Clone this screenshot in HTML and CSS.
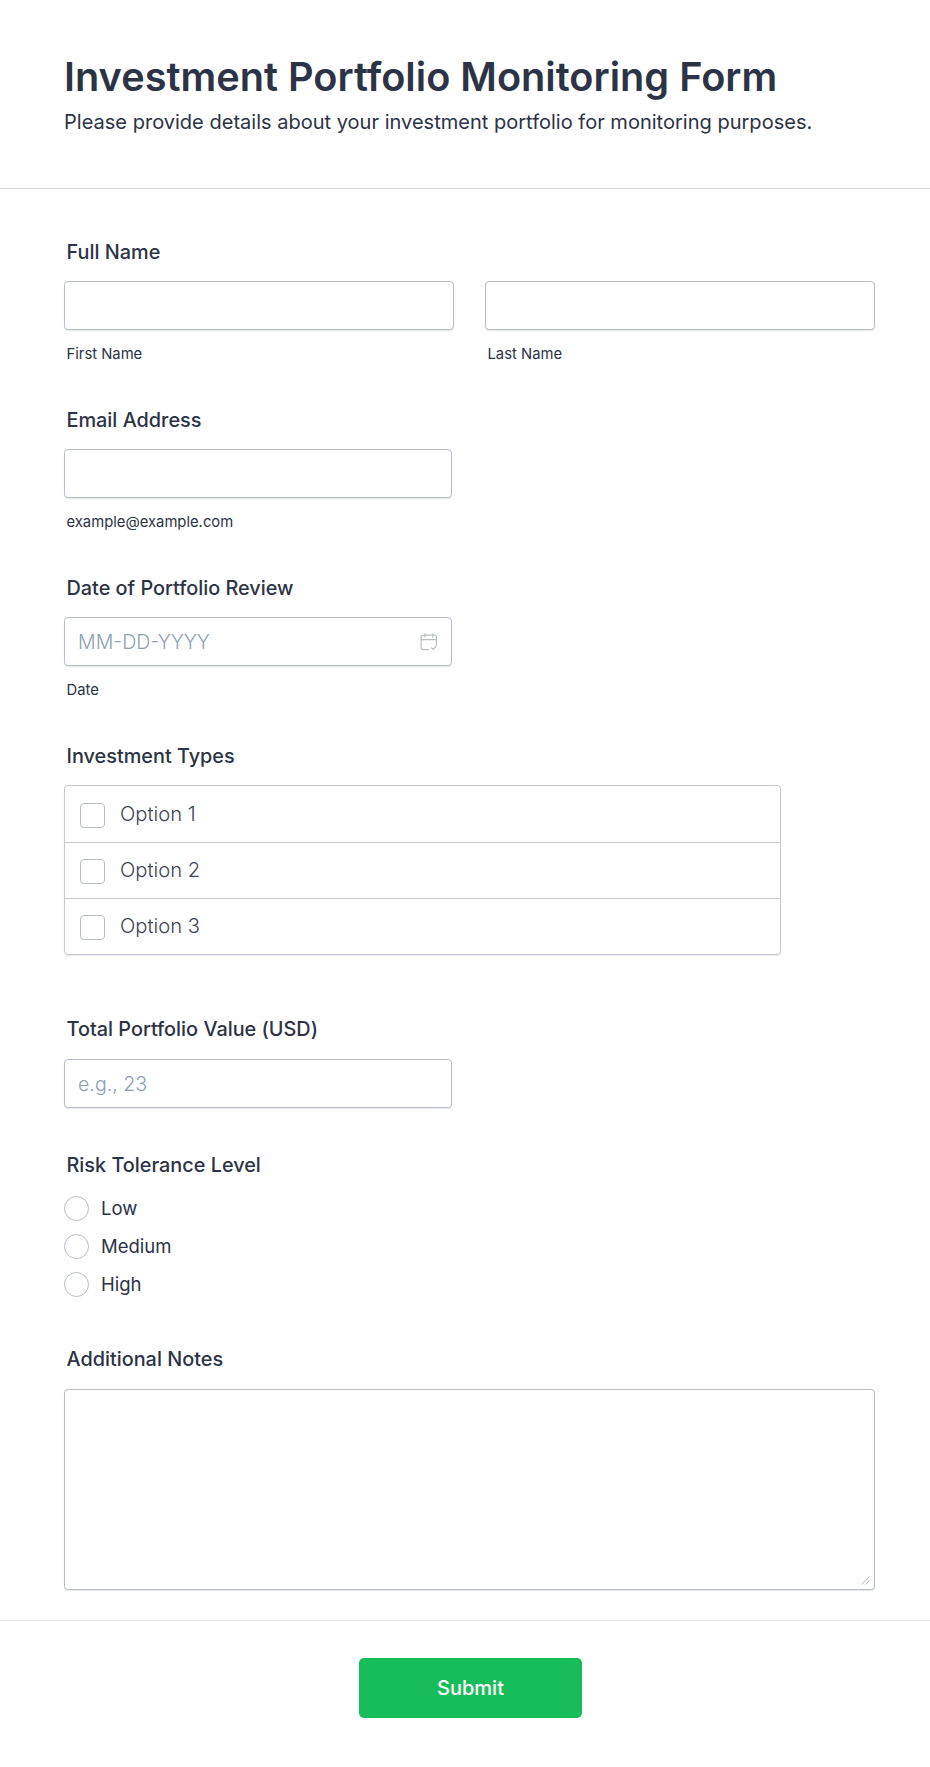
FILE: index.html
```html
<!DOCTYPE html>
<html lang="en">
<head>
<meta charset="utf-8">
<title>Investment Portfolio Monitoring Form</title>
<link rel="stylesheet" href="styles.css">
</head>
<body>
<form class="form">
  <header class="head">
    <h1 class="title">Investment Portfolio Monitoring Form</h1>
    <p class="subtitle">Please provide details about your investment portfolio for monitoring purposes.</p>
  </header>
  <div class="fields">
    <div class="field">
      <div class="label">Full Name</div>
      <div class="name-row">
        <div class="name-col"><input class="input" type="text"><div class="sub">First Name</div></div>
        <div class="name-col"><input class="input" type="text"><div class="sub">Last Name</div></div>
      </div>
    </div>
    <div class="field">
      <div class="label">Email Address</div>
      <input class="input short" type="email">
      <div class="sub">example@example.com</div>
    </div>
    <div class="field">
      <div class="label">Date of Portfolio Review</div>
      <div class="date-wrap">
        <input class="input" type="text" placeholder="MM-DD-YYYY">
        <svg class="cal" viewBox="0 0 18 18" fill="none" stroke="currentColor" stroke-width="1.2" stroke-linecap="round" stroke-linejoin="round" aria-hidden="true">
          <path d="M9 16.6H3.2a2 2 0 0 1-2-2V4.2a2 2 0 0 1 2-2h11.2a2 2 0 0 1 2 2v7.4"/>
          <path d="M1.2 6.6h15.2M5 .8v3M12.8.8v3"/>
          <path d="M11.4 14.8l1.8 1.6 3.2-3.4"/>
        </svg>
      </div>
      <div class="sub">Date</div>
    </div>
    <div class="field options-field">
      <div class="label">Investment Types</div>
      <div class="options">
        <label class="option"><input class="check" type="checkbox"><span>Option 1</span></label>
        <label class="option"><input class="check" type="checkbox"><span>Option 2</span></label>
        <label class="option"><input class="check" type="checkbox"><span>Option 3</span></label>
      </div>
    </div>
    <div class="field value-field">
      <div class="label label-wide">Total Portfolio Value (USD)</div>
      <input class="input short" type="text" placeholder="e.g., 23">
    </div>
    <div class="field risk-field">
      <div class="label risk-label">Risk Tolerance Level</div>
      <div class="radios">
        <label class="radio"><input class="dot" type="radio" name="risk"><span>Low</span></label>
        <label class="radio"><input class="dot" type="radio" name="risk"><span>Medium</span></label>
        <label class="radio"><input class="dot" type="radio" name="risk"><span>High</span></label>
      </div>
    </div>
    <div class="field notes-field">
      <div class="label label-wide">Additional Notes</div>
      <div class="notes-wrap">
        <textarea class="notes"></textarea>
        <svg class="grip" viewBox="0 0 9 9" fill="none" stroke="currentColor" stroke-width="1" aria-hidden="true">
          <path d="M0.5 8.5L8.5 0.5M4.5 8.5L8.5 4.5"/>
        </svg>
      </div>
    </div>
  </div>
  <footer class="foot">
    <button class="submit" type="button">Submit</button>
  </footer>
</form>
</body>
</html>
```

FILE: styles.css
```css
* { box-sizing: border-box; }
html, body { margin: 0; background: #fff; }
body {
  font-family: Inter, "Liberation Sans", sans-serif;
  font-variant-ligatures: none;
  color: #2c3345;
  height: 1767px;
  overflow: hidden;
}
.head {
  height: 189px;
  padding: 45px 64px 0;
  border-bottom: 1px solid #d8dae9;
}
.title {
  margin: 0;
  font-size: 39.7px;
  line-height: 64px;
  font-weight: 600;
}
.subtitle {
  margin: 1px 0 0;
  font-size: 20.05px;
  line-height: 24px;
  font-weight: 400;
}
.fields { padding: 51px 55px 0 64px; }
.field { margin-bottom: 45px; }
.label {
  font-size: 19.85px;
  line-height: 24px;
  font-weight: 500;
  padding-left: 2.5px;
  margin-bottom: 17px;
}
.label-wide { margin-bottom: 18px; }
.name-row { display: flex; gap: 31px; }
.name-col { width: 390px; }
.input {
  display: block;
  width: 100%;
  height: 49px;
  padding: 0 13px;
  border: 1px solid #b8bdc9;
  border-radius: 4px;
  background: #fff;
  font: 300 19.6px Inter, "Liberation Sans", sans-serif;
  color: #2c3345;
  box-shadow: 0 1px 1px rgba(184, 189, 201, .35);
  outline: none;
}
.input::placeholder { color: #8c9fb3; opacity: 1; }
.short { width: 388px; }
.sub {
  margin-top: 15px;
  padding-left: 2.5px;
  font-size: 14.8px;
  line-height: 18px;
  color: #2c3345;
}
.date-wrap { position: relative; width: 388px; }
.cal {
  position: absolute;
  right: 14px;
  top: 16px;
  width: 18px;
  height: 18px;
  color: #b8bdc9;
}
.options-field { margin-bottom: 62px; }
.options {
  display: grid;
  grid-template-rows: 57px 56px 55px;
  width: 717px;
  border: 1px solid #c5c8d4;
  border-radius: 4px;
  box-shadow: 0 1px 1px rgba(184, 189, 201, .35);
}
.option {
  display: flex;
  align-items: center;
  padding: 2px 0 0 15px;
  font-size: 20.2px;
  font-weight: 300;
  color: #3d4354;
  border-bottom: 1px solid #c5c8d4;
}
.option:last-child { border-bottom: 0; }
.option span { margin-left: 15px; position: relative; top: -2px; }
.check, .dot {
  appearance: none;
  margin: 0;
  width: 25px;
  height: 25px;
  flex: none;
  background: #fff;
  border: 1px solid #b8bdc9;
}
.check { border-radius: 4px; }
.dot { border-radius: 50%; }
.risk-label { margin-bottom: 19px; }
.radios { display: flex; flex-direction: column; gap: 13px; }
.radio {
  display: flex;
  align-items: center;
  height: 25px;
  font-size: 18.5px;
}
.radio span { margin-left: 12px; position: relative; top: -0.5px; }
.risk-field { margin-bottom: 50px; }
.notes-field { margin-bottom: 0; }
.notes-wrap { position: relative; width: 811px; }
.notes {
  display: block;
  width: 811px;
  height: 201px;
  border: 1px solid #b8bdc9;
  border-radius: 4px;
  background: #fff;
  box-shadow: 0 1px 1px rgba(184, 189, 201, .35);
  outline: none;
  resize: none;
}
.grip {
  position: absolute;
  right: 5px;
  bottom: 5px;
  width: 9px;
  height: 9px;
  color: #b8bdc9;
}
.foot {
  margin-top: 30px;
  padding-top: 37px;
  border-top: 1px solid #e3e5f0;
  display: flex;
  justify-content: center;
}
.submit {
  width: 223px;
  height: 60px;
  border: 0;
  border-radius: 5px;
  background: #18bd5b;
  color: #fff;
  font: 500 20px Inter, "Liberation Sans", sans-serif;
  margin-left: 11px;
}
```
